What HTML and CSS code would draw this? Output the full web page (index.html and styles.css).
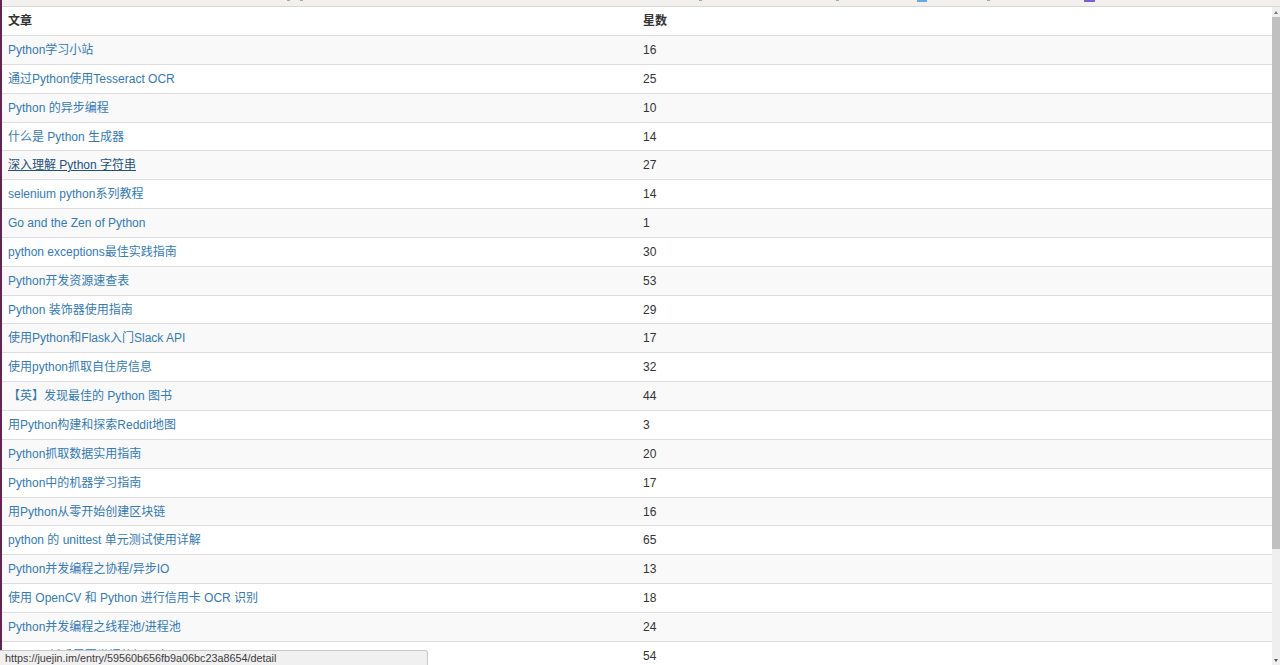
FILE: index.html
```html
<!DOCTYPE html>
<html lang="zh-CN">
<head>
<meta charset="utf-8">
<title>文章</title>
<link rel="stylesheet" href="styles.css">
</head>
<body>
<div class="window">
  <div class="edge"></div>
  <div class="frame">
    <div class="topstrip">
      <span class="mark m1"></span><span class="mark m2"></span><span class="mark m3"></span><span class="mark m4"></span><span class="mark blue"></span><span class="mark m5"></span><span class="mark purple"></span>
    </div>
    <div class="viewport">
      <div class="content">
        <table class="table">
          <thead>
            <tr><th class="col1">文章</th><th>星数</th></tr>
          </thead>
          <tbody>
            <tr><td><a href="#">Python学习小站</a></td><td>16</td></tr>
            <tr><td><a href="#">通过Python使用Tesseract OCR</a></td><td>25</td></tr>
            <tr><td><a href="#">Python 的异步编程</a></td><td>10</td></tr>
            <tr><td><a href="#">什么是 Python 生成器</a></td><td>14</td></tr>
            <tr><td><a href="#" class="hover">深入理解 Python 字符串</a></td><td>27</td></tr>
            <tr><td><a href="#">selenium python系列教程</a></td><td>14</td></tr>
            <tr><td><a href="#">Go and the Zen of Python</a></td><td>1</td></tr>
            <tr><td><a href="#">python exceptions最佳实践指南</a></td><td>30</td></tr>
            <tr><td><a href="#">Python开发资源速查表</a></td><td>53</td></tr>
            <tr><td><a href="#">Python 装饰器使用指南</a></td><td>29</td></tr>
            <tr><td><a href="#">使用Python和Flask入门Slack API</a></td><td>17</td></tr>
            <tr><td><a href="#">使用python抓取自住房信息</a></td><td>32</td></tr>
            <tr><td><a href="#">【英】发现最佳的 Python 图书</a></td><td>44</td></tr>
            <tr><td><a href="#">用Python构建和探索Reddit地图</a></td><td>3</td></tr>
            <tr><td><a href="#">Python抓取数据实用指南</a></td><td>20</td></tr>
            <tr><td><a href="#">Python中的机器学习指南</a></td><td>17</td></tr>
            <tr><td><a href="#">用Python从零开始创建区块链</a></td><td>16</td></tr>
            <tr><td><a href="#">python 的 unittest 单元测试使用详解</a></td><td>65</td></tr>
            <tr><td><a href="#">Python并发编程之协程/异步IO</a></td><td>13</td></tr>
            <tr><td><a href="#">使用 OpenCV 和 Python 进行信用卡 OCR 识别</a></td><td>18</td></tr>
            <tr><td><a href="#">Python并发编程之线程池/进程池</a></td><td>24</td></tr>
            <tr><td><a href="#">Python 新手需要掌握的知识点</a></td><td>54</td></tr>
            <tr><td><a href="#">Python 进阶之路</a></td><td>12</td></tr>
          </tbody>
        </table>
      </div>
      <div class="scrollbar">
        <div class="arrow up"></div>
        <div class="track"><div class="thumb"></div></div>
        <div class="arrow down"></div>
      </div>
    </div>
  </div>
  <div class="statusbar">https://juejin.im/entry/59560b656fb9a06bc23a8654/detail</div>
</div>
</body>
</html>
```

FILE: styles.css
```css
* { box-sizing: border-box; }
html, body { margin: 0; padding: 0; height: 100%; overflow: hidden; }
body {
  font-family: "Liberation Sans", "Noto Sans CJK SC", sans-serif;
  font-size: 12px;
  line-height: 20px;
  color: #333;
  background: #fff;
}
.window {
  position: relative;
  display: flex;
  height: 665px;
}
.edge {
  width: 2px;
  flex: none;
  background: #5e2750;
}
.frame {
  flex: 1;
  display: flex;
  flex-direction: column;
  min-width: 0;
}
.topstrip {
  height: 7px;
  flex: none;
  background: #f1f0ee;
  border-bottom: 1px solid #d8d8d6;
  display: flex;
  align-items: flex-start;
}
.mark { height: 1px; width: 3px; background: #a8a8a8; }
.m1 { margin-left: 285px; }
.m2 { margin-left: 10px; }
.m3 { margin-left: 396px; }
.m4 { margin-left: 134px; }
.blue { margin-left: 78px; width: 10px; height: 2px; background: #6aa6f0; }
.m5 { margin-left: 60px; }
.purple { margin-left: 94px; width: 11px; height: 2px; background: #7a5fd0; }
.viewport {
  flex: 1;
  display: flex;
  min-height: 0;
}
.content {
  flex: 1;
  overflow: hidden;
  min-width: 0;
}
.table {
  width: 100%;
  border-collapse: collapse;
  border-spacing: 0;
}
.table th, .table td {
  padding: 5px 6px 3px;
  text-align: left;
  vertical-align: middle;
  line-height: 19.85px;
  border-top: 1px solid #ddd;
}
.table thead th {
  border-top: 0;
  font-weight: bold;
  line-height: 20px;
  padding-top: 4px;
  padding-bottom: 4px;
  border-bottom: 1px solid #ddd;
}
.table tbody tr:first-child td { border-top: 0; }
.table .col1 { width: 50%; }
.table tbody tr:nth-child(odd) { background: #f9f9f9; }
.table a { color: #337ab7; text-decoration: none; }
.table a.hover { color: #23527c; text-decoration: underline; }
.scrollbar {
  width: 8px;
  flex: none;
  background: #efefef;
  display: flex;
  flex-direction: column;
  padding-top: 1px;
}
.arrow { height: 9px; flex: none; position: relative; }
.arrow.up::after, .arrow.down::after {
  content: "";
  position: absolute;
  left: 2px;
  border-left: 2px solid transparent;
  border-right: 2px solid transparent;
}
.arrow.up::after { top: 3px; border-bottom: 3px solid #777; }
.arrow.down::after { bottom: 3px; border-top: 3px solid #555; }
.track { flex: 1; }
.thumb { height: 532px; background: #c0c0c0; }
.statusbar {
  position: absolute;
  left: 0;
  bottom: 0;
  width: 428px;
  height: 15px;
  background: #f0f0f0;
  border-top: 1px solid #c8c8c8;
  border-right: 1px solid #c8c8c8;
  border-top-right-radius: 3px;
  font-family: "Liberation Sans", sans-serif;
  font-size: 10.8px;
  line-height: 14px;
  color: #3c3c3c;
  padding-left: 5px;
  white-space: nowrap;
}
```
